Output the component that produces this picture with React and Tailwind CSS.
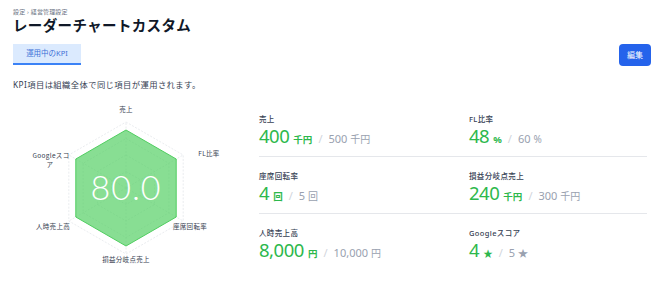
const kpis = [
  [
    { label: '売上', value: '400', unit: '千円', target: '500', tUnit: '千円' },
    { label: 'FL比率', value: '48', unit: '%', target: '60', tUnit: '%' },
  ],
  [
    { label: '座席回転率', value: '4', unit: '回', target: '5', tUnit: '回' },
    { label: '損益分岐点売上', value: '240', unit: '千円', target: '300', tUnit: '千円' },
  ],
  [
    { label: '人時売上高', value: '8,000', unit: '円', target: '10,000', tUnit: '円' },
    { label: 'Googleスコア', value: '4', unit: '★', target: '5', tUnit: '★' },
  ],
];

const CX = 126;
const CY = 89;

const hex = r =>
  [-90, -30, 30, 90, 150, 210]
    .map(a => {
      const t = (a * Math.PI) / 180;
      return `${(CX + r * Math.cos(t)).toFixed(1)},${(CY + r * Math.sin(t)).toFixed(1)}`;
    })
    .join(' ');

function Radar() {
  const labels = [
    { x: 126, y: 13, t: '売上' },
    { x: 209, y: 57, t: 'FL比率' },
    { x: 190, y: 130, t: '座席回転率' },
    { x: 126, y: 163, t: '損益分岐点売上' },
    { x: 53, y: 130, t: '人時売上高' },
    { x: 51, y: 59, t: 'Googleスコ' },
    { x: 50, y: 67.5, t: 'ア' },
  ];
  const spokes = [-90, -30, 30, 90, 150, 210].map(a => {
    const t = (a * Math.PI) / 180;
    return [CX + 66 * Math.cos(t), CY + 66 * Math.sin(t)];
  });
  return (
    <svg width="250" height="175" className="shrink-0" style={{ fontFamily: '"Noto Sans CJK JP", "Noto Sans", sans-serif' }}>
      {[66, 49.5, 33, 16.5].map(r => (
        <polygon key={r} points={hex(r)} fill="none" stroke="#e5e7eb" strokeWidth="0.8" strokeDasharray="2 1.5" />
      ))}
      {spokes.map(([x, y], i) => (
        <line key={i} x1={CX} y1={CY} x2={x} y2={y} stroke="#e5e7eb" strokeWidth="0.8" strokeDasharray="2 1.5" />
      ))}
      <polygon points={hex(58)} fill="rgb(80,206,96)" fillOpacity="0.68" stroke="rgb(80,206,96)" strokeWidth="1" />
      {labels.map(l => (
        <text key={l.t} x={l.x} y={l.y} textAnchor="middle" fontSize="6.5" fill="#374151" letterSpacing="0.3">
          {l.t}
        </text>
      ))}
      <text
        x={CX}
        y={CY + 12}
        textAnchor="middle"
        fontSize="34"
        fontWeight="300"
        fill="#ffffff"
        letterSpacing="1"
        style={{ fontFamily: 'Lato, "Noto Sans", sans-serif' }}
      >
        80.0
      </text>
    </svg>
  );
}

function Kpi({ k }) {
  return (
    <div className="flex flex-col">
      <span className="text-[7.5px] font-medium tracking-wider text-gray-700 leading-none">{k.label}</span>
      <div className="flex items-baseline mt-[4px] leading-none">
        <span className="text-[18.5px] text-[#2db84c] tracking-tight">{k.value}</span>
        <span className="text-[9.5px] font-bold text-[#2db84c] ml-[4px]">{k.unit}</span>
        <span className="text-[11px] text-gray-300 mx-[6px]">/</span>
        <span className="text-[11px] text-gray-400">{k.target}</span>
        <span className="text-[10px] text-gray-400 ml-[3px]">{k.tUnit}</span>
      </div>
    </div>
  );
}

export default function App() {
  return (
    <div
      className="w-[670px] h-[293px] bg-white overflow-hidden"
      style={{ fontFamily: '"Noto Sans", "Noto Sans CJK JP", sans-serif' }}
    >
      <div className="px-[13px] pt-[8px]">
        <div className="text-[6px] text-gray-500 tracking-wide leading-[8px]">設定 › 経営管理設定</div>
        <h1 className="text-[14.5px] font-bold text-gray-900 mt-[2px] leading-none tracking-wide">レーダーチャートカスタム</h1>

        <div className="flex items-center justify-between mt-[11px] pr-[6px]">
          <div className="w-[68px] h-[21px] bg-[#dbeafe] border-b-2 border-[#3b82f6] flex items-center justify-center text-[7.5px] text-[#3b6fd6]">
            運用中のKPI
          </div>
          <button className="w-[32px] h-[22px] bg-[#2563eb] rounded-[4px] text-white text-[8px]">編集</button>
        </div>

        <p className="text-[8.3px] text-gray-700 tracking-wider mt-[15px] leading-none">
          KPI項目は組織全体で同じ項目が運用されます。
        </p>
      </div>

      <div className="flex mt-[10px]">
        <Radar />
        <div className="ml-[9px] w-[388px] pt-[17px]">
          {kpis.map((row, i) => (
            <div
              key={i}
              className={`grid grid-cols-[210px_1fr] pb-[10px] mb-[16px] ${i < 2 ? 'border-b border-gray-200' : ''}`}
            >
              <Kpi k={row[0]} />
              <Kpi k={row[1]} />
            </div>
          ))}
        </div>
      </div>
    </div>
  );
}
